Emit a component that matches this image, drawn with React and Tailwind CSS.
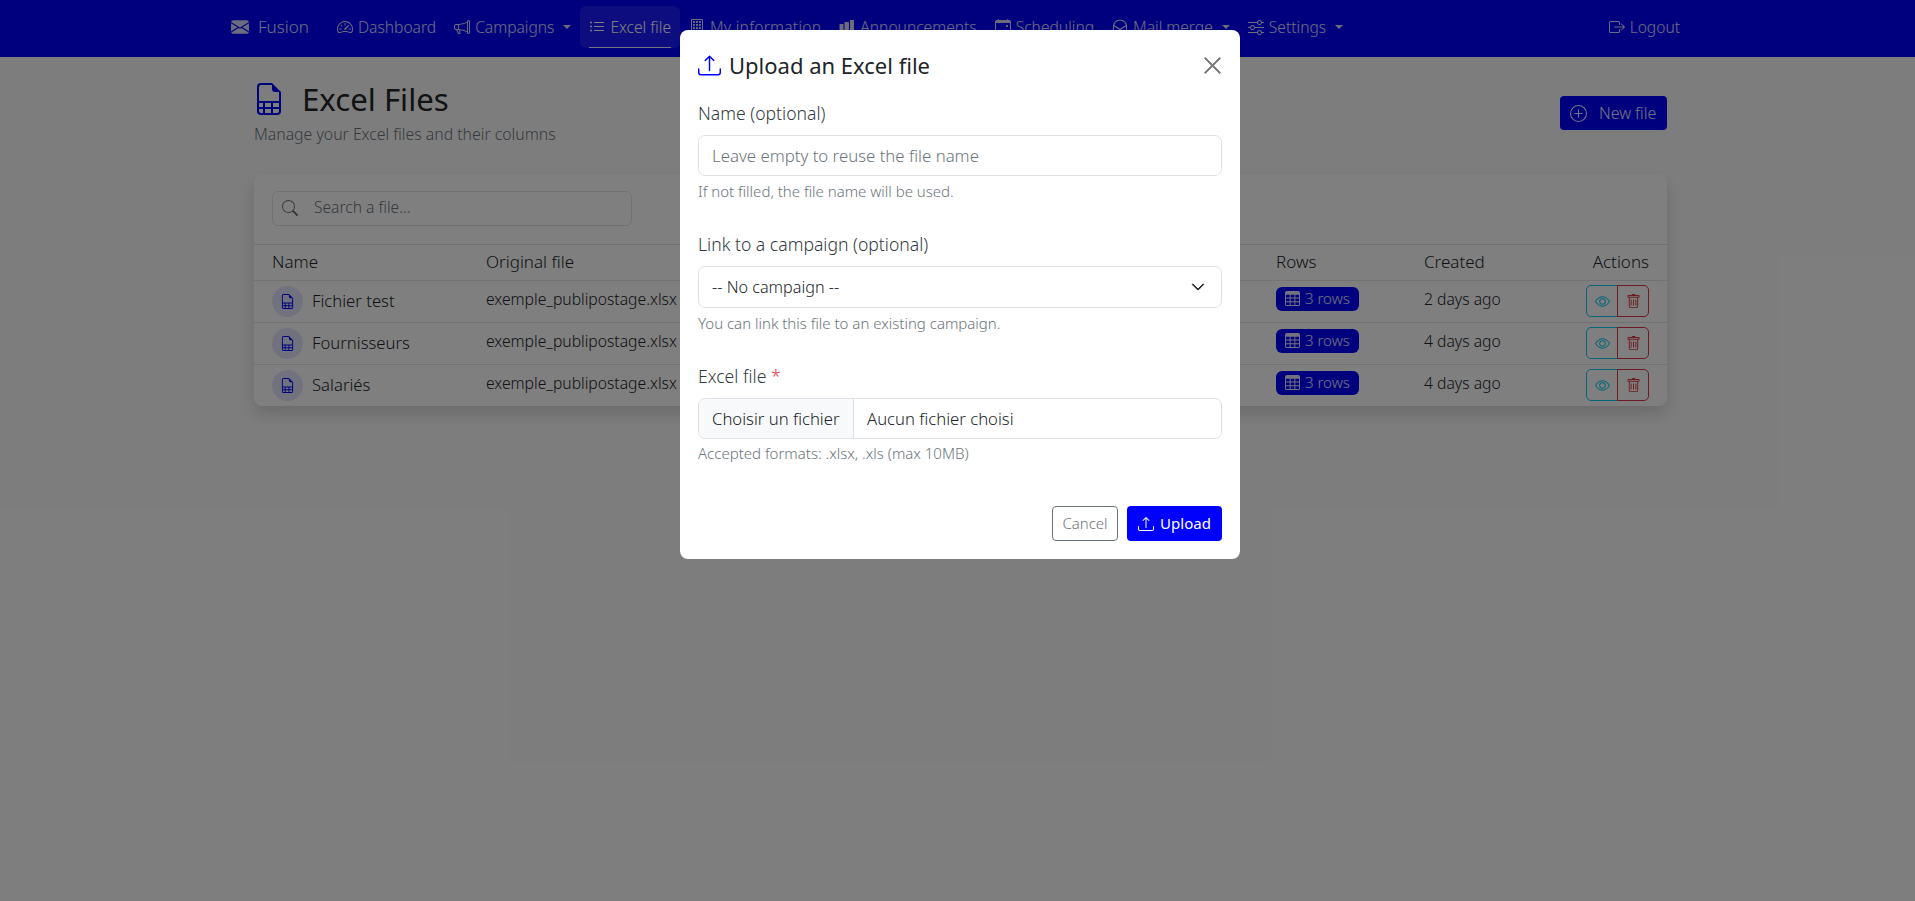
import React from "react";
import {
  BsEnvelopeFill, BsSpeedometer2, BsMegaphone, BsListUl, BsTable, BsCalendarEvent,
  BsSliders, BsBoxArrowRight, BsFileEarmarkSpreadsheet, BsPlusCircle, BsSearch, BsEye,
  BsTrash, BsUpload, BsChevronDown, BsXLg, BsBuilding,
} from "react-icons/bs";

const Caret = () => (
  <span className="ml-[4px] inline-block h-0 w-0 border-x-[4px] border-t-[4px] border-x-transparent border-t-current" />
);

const BarsIcon = ({ className }) => (
  <svg viewBox="0 0 16 16" width="1em" height="1em" fill="currentColor" className={className}>
    <rect x="0.5" y="5" width="4" height="10" rx="0.5" />
    <rect x="5.5" y="3" width="4.5" height="12" rx="0.5" />
    <rect x="11" y="1" width="4" height="14" rx="0.5" />
  </svg>
);

const MailIcon = ({ className }) => (
  <svg viewBox="0 0 16 16" width="1em" height="1em" fill="none" stroke="currentColor" strokeWidth="1.1" className={className}>
    <path d="M1.5 14.5V7.5C1.5 3.8 4.4 1 8 1s6.5 2.8 6.5 6.5v7z" />
    <path d="M1.8 6.5 8 10.5l6.2-4" />
  </svg>
);

function NavItem({ icon: Icon, label, caret, active, labelClass = "" }) {
  return (
    <div className={"relative flex h-[42px] shrink-0 items-center gap-[5px] rounded-md px-[9px] " + (active ? "bg-white/10 text-white" : "")}>
      <Icon className="text-[16px]" />
      <span className={"mt-px " + labelClass}>{label}</span>
      {caret && <Caret />}
      {active && <span className="absolute bottom-0 left-[9px] right-[9px] h-px bg-white/90" />}
    </div>
  );
}

const rows = [
  { name: "Fichier test", when: "2 days ago" },
  { name: "Fournisseurs", when: "4 days ago" },
  { name: "Salariés", when: "4 days ago" },
];

const gridCols = "grid grid-cols-[214px_790px_148px_1fr_auto] items-center px-[18px]";

function Row({ name, when }) {
  return (
    <div className={gridCols + " h-[42px] border-t border-[#e5e5e5] text-[15.7px] text-[#212529]"}>
      <div className="flex items-center gap-[9px]">
        <span className="flex h-[31px] w-[31px] items-center justify-center rounded-full bg-[#0000ff]/10 text-[15px] text-[#0000ff]">
          <BsFileEarmarkSpreadsheet />
        </span>
        <span className="-mt-[2px] text-[16.7px]">{name}</span>
      </div>
      <div className="-mt-[3px]">exemple_publipostage.xlsx</div>
      <div className="-mt-[3px]">
        <span className="inline-flex h-[24px] w-[83px] items-center gap-[5px] rounded-md bg-[#0000ff] pl-[9px] text-[15px] text-white/90">
          <BsTable className="text-[15px]" />3 rows
        </span>
      </div>
      <div className="-mt-[3px]">{when}</div>
      <div className="flex">
        <span className="flex h-[32px] w-[32px] items-center justify-center rounded-l-[5px] border border-[#0dcaf0] text-[15px] text-[#0dcaf0]"><BsEye /></span>
        <span className="-ml-px flex h-[32px] w-[32px] items-center justify-center rounded-r-[5px] border border-[#dc3545] text-[15px] text-[#dc3545]"><BsTrash /></span>
      </div>
    </div>
  );
}

export default function App() {
  return (
    <div className="relative h-[901px] w-full overflow-hidden bg-[#fbfbfb] font-['Noto_Sans',sans-serif] font-light text-[#212529]">
      <nav className="flex h-[57px] items-center bg-[#0000ff] pb-[3px] pl-[231px] pr-[226px] text-[15.6px] text-white/85">
        <div className="flex w-[97px] shrink-0 items-center gap-[9px] text-[17px]">
          <BsEnvelopeFill className="text-[18px]" />
          <span>Fusion</span>
        </div>
        <NavItem icon={BsSpeedometer2} label="Dashboard" />
        <NavItem icon={BsMegaphone} label="Campaigns" caret />
        <NavItem icon={BsListUl} label="Excel file" active />
        <NavItem icon={BsBuilding} label="My information" labelClass="tracking-[0.25px]" />
        <NavItem icon={BarsIcon} label="Announcements" />
        <NavItem icon={BsCalendarEvent} label="Scheduling" />
        <NavItem icon={MailIcon} label="Mail merge" caret />
        <NavItem icon={BsSliders} label="Settings" caret />
        <div className="ml-auto"><NavItem icon={BsBoxArrowRight} label="Logout" /></div>
      </nav>

      <main className="pl-[254px] pr-[248px] pt-[23px]">
        <div className="flex items-start justify-between">
          <div>
            <div className="-ml-px flex items-center gap-[17px]">
              <BsFileEarmarkSpreadsheet className="text-[32px] text-[#0000ff]" />
              <h1 className="text-[31.2px] font-normal leading-[38px]">Excel Files</h1>
            </div>
            <p className="mt-[5px] text-[15.8px] text-[#6c757d]">Manage your Excel files and their columns</p>
          </div>
          <button className="mt-[16px] flex h-[34px] w-[107px] items-center gap-[12px] rounded-[4px] bg-[#0000ff] pl-[10px] text-[16px] text-white/90">
            <BsPlusCircle className="text-[17px]" />New file
          </button>
        </div>

        <section className="mt-[27px] rounded-lg bg-white shadow-[0_8px_16px_rgba(0,0,0,0.15)]">
          <div className="h-[70px] px-[18px] pt-[17px]">
            <div className="flex h-[35px] w-[360px] items-center gap-[16px] rounded-md border border-[#dee2e6] pl-[9px] text-[15.6px] text-[#6c757d]">
              <BsSearch className="text-[16px]" />
              <span>Search a file...</span>
            </div>
          </div>
          <div className={gridCols + " h-[36px] border-t border-[#dee2e6] text-[17px]"}>
            <div>Name</div>
            <div>Original file</div>
            <div>Rows</div>
            <div>Created</div>
            <div className="text-right">Actions</div>
          </div>
          {rows.map((r) => <Row key={r.name} {...r} />)}
        </section>
      </main>

      <div className="absolute inset-0 bg-black/50" />

      <div className="absolute left-[680px] top-[30px] h-[529px] w-[560px] rounded-lg bg-white text-[#212529]">
        <header className="flex h-[70px] items-center justify-between pl-[18px] pr-[17px]">
          <h2 className="flex items-center gap-[8px] text-[22px] font-normal">
            <BsUpload className="text-[23px] text-[#0000ff]" />Upload an Excel file
          </h2>
          <BsXLg className="stroke-[0.6] text-[21px] text-[#757575]" />
        </header>
        <div className="px-[18px]">
          <label className="block text-[17.6px] leading-[26px] text-[#343a40]">Name (optional)</label>
          <div className="mt-[9px] flex h-[41px] items-center rounded-[7px] border border-[#dee2e6] px-[13px] text-[16.8px] text-[#6c757d]">Leave empty to reuse the file name</div>
          <p className="mt-[5px] text-[15px] leading-[20px] text-[#6c757d]">If not filled, the file name will be used.</p>

          <label className="mt-[30px] block text-[17.6px] leading-[26px] text-[#343a40]">Link to a campaign (optional)</label>
          <div className="mt-[9px] flex h-[42px] items-center justify-between rounded-[7px] border border-[#dee2e6] pl-[13px] pr-[16px] text-[16.2px]">
            <span>-- No campaign --</span>
            <BsChevronDown className="stroke-[1] text-[14px]" />
          </div>
          <p className="mt-[5px] text-[15px] leading-[20px] text-[#6c757d]">You can link this file to an existing campaign.</p>

          <label className="mt-[30px] block text-[17.6px] leading-[26px] text-[#343a40]">Excel file <span className="text-[#dc3545]">*</span></label>
          <div className="mt-[9px] flex h-[41px] items-center rounded-[7px] border border-[#dee2e6] text-[16.7px]">
            <span className="flex h-full w-[155px] items-center rounded-l-[7px] border-r border-[#dee2e6] bg-[#f8f9fa] pl-[13px]">Choisir un fichier</span>
            <span className="pl-[13px]">Aucun fichier choisi</span>
          </div>
          <p className="mt-[4px] text-[15px] leading-[20px] text-[#6c757d]">Accepted formats: .xlsx, .xls (max 10MB)</p>

          <div className="mt-[43px] flex justify-end gap-[9px]">
            <button className="h-[35px] w-[66px] rounded-[4px] border border-[#6c757d] text-[15px] text-[#6c757d]">Cancel</button>
            <button className="flex h-[35px] w-[95px] items-center justify-center gap-[6px] rounded-[4px] bg-[#0000ff] text-[15px] font-normal text-white">
              <BsUpload className="text-[16px]" />Upload
            </button>
          </div>
        </div>
      </div>
    </div>
  );
}
